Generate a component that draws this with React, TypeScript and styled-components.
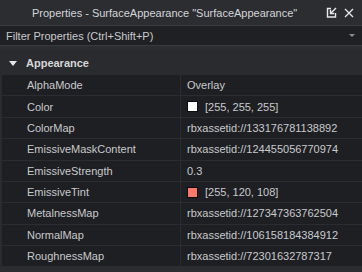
import styled, { createGlobalStyle } from "styled-components";

const Global = createGlobalStyle`
  html, body {
    margin: 0;
    padding: 0;
    background: #2b2d31;
  }
  body {
    font-family: "Liberation Sans", Arial, sans-serif;
    font-size: 11px;
    color: #cfd0d2;
  }
`

const Panel = styled.div`
  width: 362px;
  height: 272px;
  display: flex;
  flex-direction: column;
  background: #2b2d31;
  overflow: hidden;
`

const TitleBar = styled.div`
  height: 25px;
  display: flex;
  align-items: center;
  padding: 0 8px 0 32px;
  box-sizing: border-box;
  background: #2b2d31;
`

const Title = styled.div`
  flex: 1;
  color: #d4d5d7;
  white-space: nowrap;
`

const TitleIcons = styled.div`
  display: flex;
  align-items: center;
  gap: 7px;
`

const Filter = styled.div`
  height: 21px;
  display: flex;
  align-items: center;
  justify-content: space-between;
  padding: 0 7px 0 6px;
  box-sizing: border-box;
  background: #1f2023;
  border-top: 1px solid #3a3b3f;
  border-bottom: 1px solid #3a3b3f;
  color: #c9cacc;
`

const Caret = styled.div`
  width: 0;
  height: 0;
  border-left: 3px solid transparent;
  border-right: 3px solid transparent;
  border-top: 3px solid #8a8b8e;
`

const Section = styled.div`
  margin-top: 4px;
  display: flex;
  flex-direction: column;
  border-left: 2px solid #2a2b2f;
`

const Header = styled.div`
  height: 25px;
  display: flex;
  align-items: center;
  gap: 9px;
  padding: 1px 0 0 7px;
  box-sizing: border-box;
  background: #2a2b2f;
  font-weight: bold;
  color: #d6d7d9;
`

const Arrow = styled.div`
  width: 0;
  height: 0;
  border-left: 4px solid transparent;
  border-right: 4px solid transparent;
  border-top: 5px solid #e6e6e6;
`

const Row = styled.div`
  height: 21.375px;
  display: grid;
  grid-template-columns: 179px 1fr;
  box-sizing: border-box;
  background: #1e1f23;
  border-bottom: 1px solid #2b2c30;
`

const Name = styled.div`
  display: flex;
  align-items: center;
  padding-left: 25px;
  border-right: 1px solid #2b2c30;
  color: #c9cacc;
`

const Value = styled.div`
  display: flex;
  align-items: center;
  gap: 7px;
  padding-left: 6px;
  color: #c9cacc;
  white-space: nowrap;
`

const Swatch = styled.span<{ $c: string }>`
  flex-shrink: 0;
  width: 11px;
  height: 11px;
  box-sizing: border-box;
  background: ${(p) => p.$c};
  border: 1px solid #0c0c0c;
`

type Prop = { name: string; value: string; color?: string };

const props: Prop[] = [
  { name: "AlphaMode", value: "Overlay" },
  { name: "Color", value: "[255, 255, 255]", color: "#ffffff" },
  { name: "ColorMap", value: "rbxassetid://133176781138892" },
  { name: "EmissiveMaskContent", value: "rbxassetid://124455056770974" },
  { name: "EmissiveStrength", value: "0.3" },
  { name: "EmissiveTint", value: "[255, 120, 108]", color: "#ff786c" },
  { name: "MetalnessMap", value: "rbxassetid://127347363762504" },
  { name: "NormalMap", value: "rbxassetid://106158184384912" },
  { name: "RoughnessMap", value: "rbxassetid://72301632787317" },
];

function App() {
  return (
    <Panel>
      <Global />
      <TitleBar>
        <Title>Properties - SurfaceAppearance "SurfaceAppearance"</Title>
        <TitleIcons>
          <svg width="11" height="11" viewBox="0 0 11 11" fill="none" stroke="#e8e8e8" strokeWidth="1.4">
            <path d="M5 1.5H1.5V10H9.5V6" />
            <path d="M10 1L5 6" />
            <path d="M4.5 2.8V6.5H8.2" />
          </svg>
          <svg width="10" height="10" viewBox="0 0 10 10" stroke="#e8e8e8" strokeWidth="1.3">
            <path d="M1 1L9 9M9 1L1 9" />
          </svg>
        </TitleIcons>
      </TitleBar>
      <Filter>
        <span>Filter Properties (Ctrl+Shift+P)</span>
        <Caret />
      </Filter>
      <Section>
        <Header>
          <Arrow />
          <span>Appearance</span>
        </Header>
        {props.map((p) => (
          <Row key={p.name}>
            <Name>{p.name}</Name>
            <Value>
              {p.color && <Swatch $c={p.color} />}
              <span>{p.value}</span>
            </Value>
          </Row>
        ))}
      </Section>
    </Panel>
  );
}

export default App;
